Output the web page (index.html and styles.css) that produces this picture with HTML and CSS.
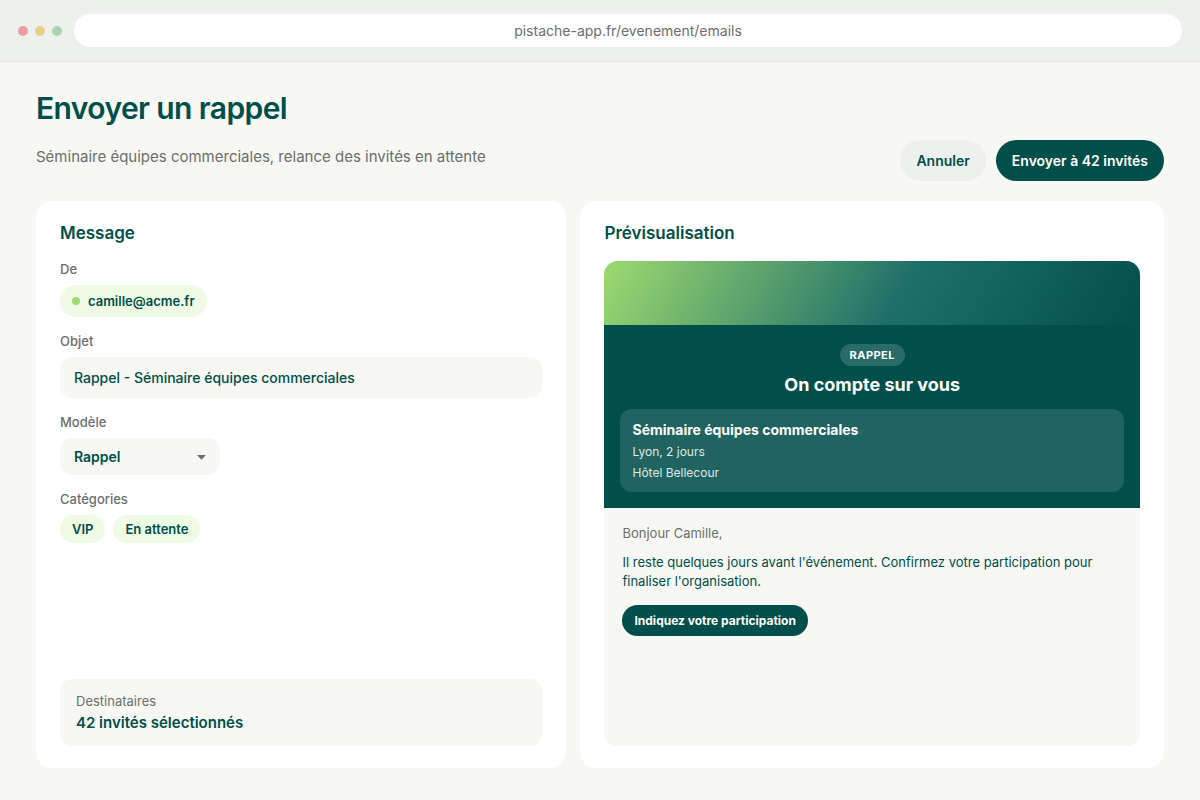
FILE: index.html
```html
<!DOCTYPE html>
<html lang="fr">
<head>
<meta charset="utf-8">
<meta name="viewport" content="width=device-width, initial-scale=1">
<title>Envoyer un rappel</title>
<link rel="stylesheet" href="styles.css">
</head>
<body>
<header class="browser">
  <div class="dots">
    <span class="dot dot-red"></span>
    <span class="dot dot-yellow"></span>
    <span class="dot dot-green"></span>
  </div>
  <div class="url">pistache-app.fr/evenement/emails</div>
</header>
<main class="page">
  <div class="page-head">
    <div class="heading">
      <h1 class="title">Envoyer un rappel</h1>
      <p class="subtitle">Séminaire équipes commerciales, relance des invités en attente</p>
    </div>
    <div class="actions">
      <button class="btn btn-ghost" type="button">Annuler</button>
      <button class="btn btn-primary" type="button">Envoyer à 42 invités</button>
    </div>
  </div>
  <div class="columns">
    <section class="card">
      <h2 class="card-title">Message</h2>
      <div class="field">
        <span class="label">De</span>
        <span class="sender"><span class="sender-dot"></span>camille@acme.fr</span>
      </div>
      <div class="field">
        <label class="label" for="subject">Objet</label>
        <input class="input" id="subject" type="text" value="Rappel - Séminaire équipes commerciales">
      </div>
      <div class="field">
        <label class="label" for="template">Modèle</label>
        <div class="select-wrap">
          <select class="select" id="template"><option>Rappel</option></select>
          <svg class="caret" width="9" height="5" viewBox="0 0 9 5" aria-hidden="true"><path d="M.8 0h7.4q.7 0 .3.5L5 4.3q-.5.5-1 0L.5.5Q.1 0 .8 0z" fill="currentColor"/></svg>
        </div>
      </div>
      <div class="field">
        <span class="label">Catégories</span>
        <div class="chips">
          <span class="chip">VIP</span>
          <span class="chip">En attente</span>
        </div>
      </div>
      <div class="recipients">
        <span class="recipients-label">Destinataires</span>
        <strong class="recipients-count">42 invités sélectionnés</strong>
      </div>
    </section>
    <section class="card">
      <h2 class="card-title">Prévisualisation</h2>
      <article class="email">
        <div class="email-banner"></div>
        <div class="email-hero">
          <span class="badge">RAPPEL</span>
          <h3 class="email-title">On compte sur vous</h3>
          <div class="event">
            <strong class="event-name">Séminaire équipes commerciales</strong>
            <span class="event-line">Lyon, 2 jours</span>
            <span class="event-line">Hôtel Bellecour</span>
          </div>
        </div>
        <div class="email-body">
          <p class="greeting">Bonjour Camille,</p>
          <p class="email-text">Il reste quelques jours avant l'événement. Confirmez votre participation pour finaliser l'organisation.</p>
          <a class="cta" href="#participation">Indiquez votre participation</a>
        </div>
      </article>
    </section>
  </div>
</main>
</body>
</html>
```
FILE: styles.css
```css
:root {
  --green: #004f4a;
  --bg: #f7f8f3;
  --mist: #eef0ee;
  --pale: #f0fbe6;
  --lime: #9edb70;
  --grey: #6b706c;
}

* {
  box-sizing: border-box;
  margin: 0;
}

body {
  min-height: 100vh;
  display: flex;
  flex-direction: column;
  background: var(--bg);
  color: var(--green);
  font-family: Inter, "Liberation Sans", sans-serif;
}

button,
input,
select {
  border: 0;
  font-family: inherit;
  color: inherit;
}

.browser {
  display: flex;
  align-items: center;
  gap: 12px;
  padding: 14px 18px;
  background: var(--mist);
  border-bottom: 1px solid #e3e6e3;
}

.dots {
  display: flex;
  gap: 7px;
}

.dot {
  width: 10px;
  height: 10px;
  border-radius: 50%;
}

.dot-red { background: #eb9fa2; }
.dot-yellow { background: #e9cf8a; }
.dot-green { background: #a5d6b0; }

.url {
  flex: 1;
  padding: 8px 16px;
  border-radius: 17px;
  background: #fff;
  color: var(--grey);
  font-size: 14px;
  line-height: 17px;
  text-align: center;
}

.page {
  flex: 1;
  display: flex;
  flex-direction: column;
  gap: 20px;
  padding: 28px 36px 32px;
}

.page-head {
  display: flex;
  justify-content: space-between;
  align-items: flex-end;
}

.heading {
  display: flex;
  flex-direction: column;
  gap: 21px;
  padding-bottom: 15px;
}

.title {
  font-size: 30px;
  font-weight: 600;
  line-height: 36px;
  letter-spacing: -0.02em;
}

.subtitle {
  color: var(--grey);
  font-size: 15px;
  line-height: 19px;
}

.actions {
  display: flex;
  gap: 10px;
}

.btn {
  padding: 12px 16px;
  border-radius: 21px;
  font-size: 14px;
  line-height: 17px;
  font-weight: 600;
}

.btn-ghost { background: var(--mist); }

.btn-primary {
  background: var(--green);
  color: #fff;
}

.columns {
  flex: 1;
  display: grid;
  grid-template-columns: 1fr 1.1fr;
  gap: 14px;
}

.card {
  display: flex;
  flex-direction: column;
  gap: 16px;
  padding: 22px 24px;
  border-radius: 16px;
  background: #fff;
}

.card-title {
  padding-bottom: 2px;
  font-size: 17px;
  line-height: 20px;
  font-weight: 600;
}

.field {
  display: flex;
  flex-direction: column;
  align-items: flex-start;
  gap: 8px;
}

.label {
  color: var(--grey);
  font-size: 13px;
  line-height: 16px;
  font-weight: 500;
}

.sender {
  display: flex;
  align-items: center;
  gap: 8px;
  padding: 8px 12px;
  border-radius: 16px;
  background: var(--pale);
  font-size: 13px;
  line-height: 16px;
  font-weight: 600;
}

.sender-dot {
  width: 8px;
  height: 8px;
  border-radius: 50%;
  background: var(--lime);
}

.input {
  width: 100%;
  height: 41px;
  padding: 0 14px;
  border-radius: 12px;
  background: var(--bg);
  font-size: 14px;
  font-weight: 500;
}

.select-wrap {
  display: grid;
  align-items: center;
  width: 160px;
}

.select {
  grid-area: 1 / 1;
  appearance: none;
  height: 37px;
  padding: 0 14px;
  border-radius: 12px;
  background: var(--bg);
  font-size: 14px;
  font-weight: 600;
}

.caret {
  grid-area: 1 / 1;
  justify-self: end;
  margin-right: 14px;
  margin-top: 2px;
  color: var(--grey);
  pointer-events: none;
}

.chips {
  display: flex;
  gap: 8px;
}

.chip {
  padding: 6px 12px;
  border-radius: 14px;
  background: var(--pale);
  font-size: 13px;
  line-height: 16px;
  font-weight: 600;
}

.recipients {
  display: flex;
  flex-direction: column;
  gap: 4px;
  margin-top: auto;
  padding: 14px 16px;
  border-radius: 12px;
  background: var(--bg);
}

.recipients-label {
  color: var(--grey);
  font-size: 13px;
  line-height: 16px;
}

.recipients-count {
  font-size: 15px;
  line-height: 19px;
  font-weight: 600;
}

.email {
  flex: 1;
  overflow: hidden;
  border-radius: 14px;
  background: var(--bg);
}

.email-banner {
  height: 64px;
  background: linear-gradient(120deg, #9edb70 0%, #1f6f6a 55%, #004f4a 100%);
}

.email-hero {
  display: flex;
  flex-direction: column;
  align-items: center;
  padding: 19px 16px 16px;
  background: var(--green);
  color: #fff;
}

.badge {
  padding: 4px 10px;
  border-radius: 11px;
  background: rgba(255, 255, 255, 0.16);
  font-size: 11px;
  line-height: 14px;
  font-weight: 700;
  letter-spacing: 0.04em;
}

.email-title {
  margin: 8px 0 13px;
  font-size: 18px;
  line-height: 22px;
  font-weight: 700;
}

.event {
  display: flex;
  flex-direction: column;
  gap: 6px;
  align-self: stretch;
  padding: 12px;
  border-radius: 12px;
  background: rgba(255, 255, 255, 0.12);
}

.event-name {
  font-size: 14px;
  line-height: 17px;
  font-weight: 700;
}

.event-line {
  font-size: 12px;
  line-height: 15px;
  opacity: 0.85;
}

.email-body {
  display: flex;
  flex-direction: column;
  align-items: flex-start;
  gap: 12px;
  padding: 17px 18px;
  font-size: 13px;
}

.greeting {
  color: var(--grey);
  line-height: 16px;
}

.email-text {
  line-height: 19px;
}

.cta {
  margin-top: 2px;
  padding: 8px 12px;
  border-radius: 16px;
  background: var(--green);
  color: #fff;
  font-size: 12px;
  line-height: 15px;
  font-weight: 700;
  text-decoration: none;
}
```
